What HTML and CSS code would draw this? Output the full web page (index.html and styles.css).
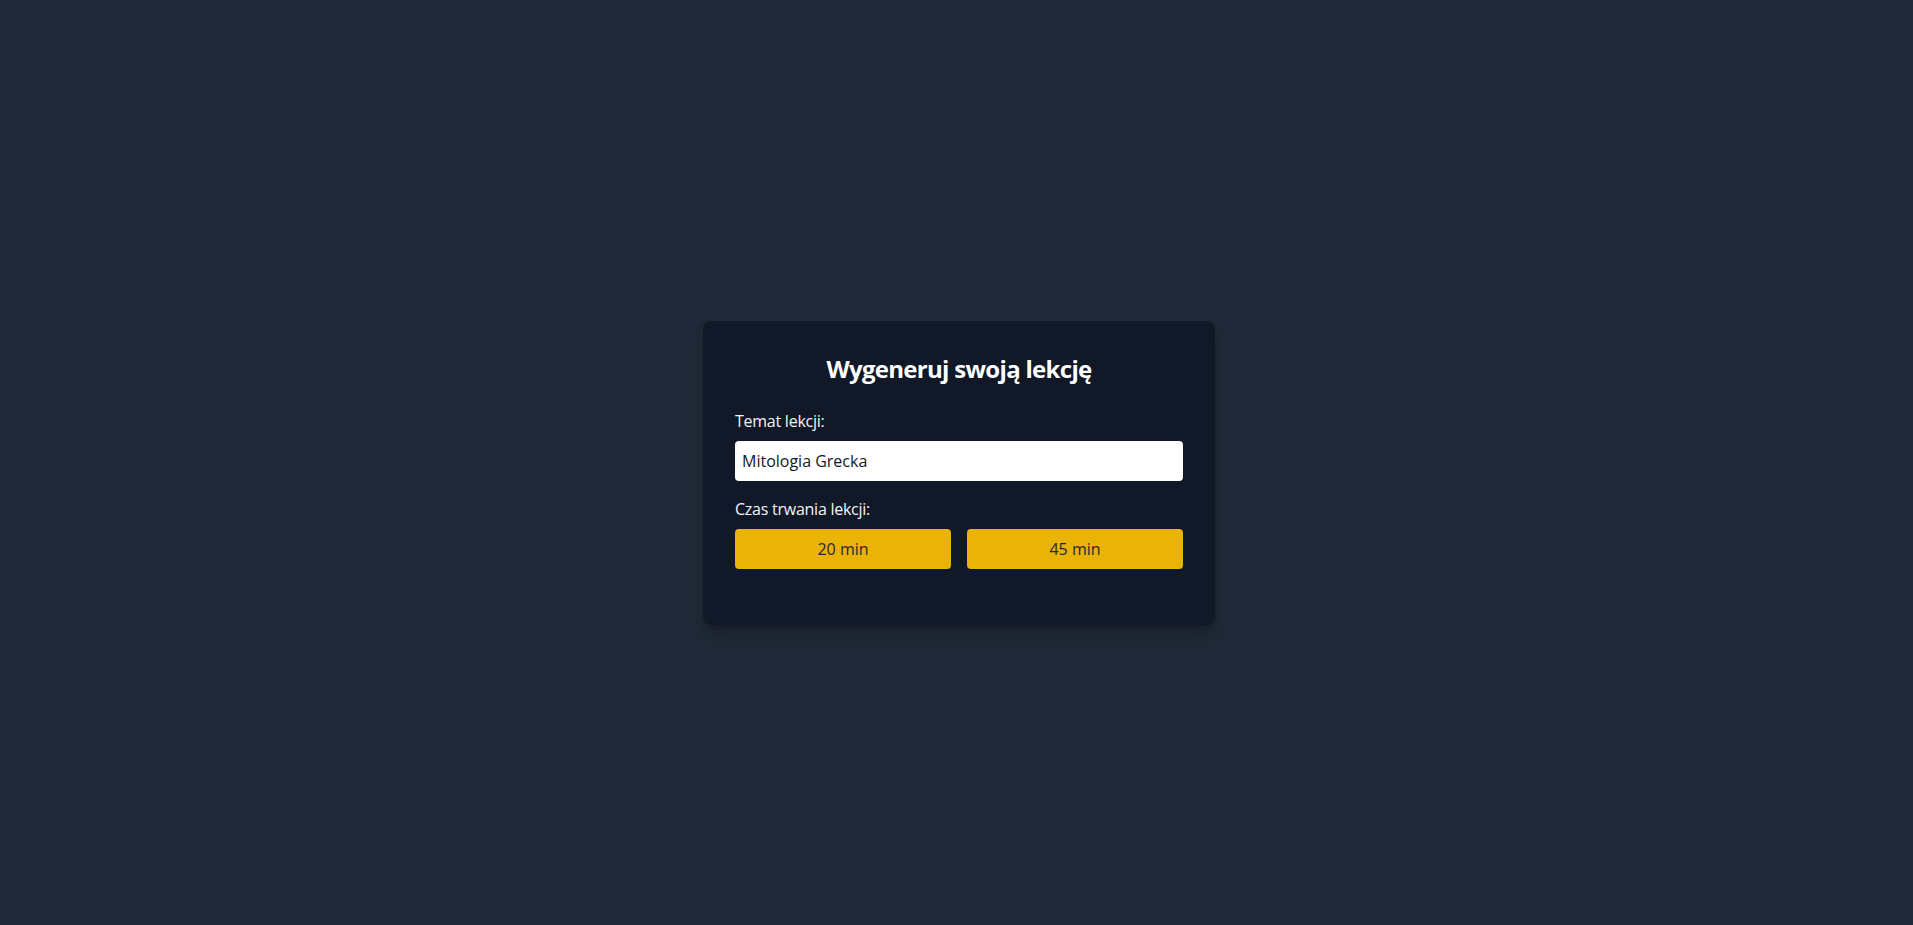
FILE: index.html
```html
<!doctype html>
<html>
  <head>
    <meta charset="utf-8">
    <title>Wygeneruj swoją lekcję</title>
    <link rel="stylesheet" href="styles.css">
  </head>
  <body>
    <main class="page">
      <section class="card">
        <h1 class="card-title">Wygeneruj swoją lekcję</h1>

        <label class="field-label" for="topic">Temat lekcji:</label>
        <input class="field-input" type="text" id="topic" name="topic" value="Mitologia Grecka">

        <label class="field-label">Czas trwania lekcji:</label>
        <div class="durations">
          <button class="duration-btn" type="button">20 min</button>
          <button class="duration-btn" type="button">45 min</button>
        </div>
      </section>
    </main>
  </body>
</html>
```

FILE: styles.css
```css
* {
  box-sizing: border-box;
}

html, body {
  margin: 0;
  padding: 0;
}

body {
  background: #1f2937;
  color: #f3f4f6;
  font-family: "Open Sans", "Noto Sans", "Liberation Sans", sans-serif;
  font-size: 16px;
  line-height: 24px;
  letter-spacing: -0.25px;
}

.page {
  min-height: 100vh;
  display: flex;
  align-items: center;
  justify-content: center;
  padding: 21px 0 0 5px;
}

.card {
  width: 512px;
  background: #111827;
  border-radius: 8px;
  padding: 32px 32px 56px;
  box-shadow: 0 10px 15px -3px rgba(0, 0, 0, 0.25), 0 4px 6px -4px rgba(0, 0, 0, 0.2);
}

.card-title {
  margin: 0 0 24px;
  font-size: 24px;
  line-height: 32px;
  font-weight: 700;
  letter-spacing: -0.7px;
  text-align: center;
  color: #ffffff;
}

.field-label {
  display: block;
  margin-bottom: 8px;
  color: #f3f4f6;
}

.field-input {
  display: block;
  width: 100%;
  height: 40px;
  margin: 0 0 16px;
  padding: 8px 7px;
  border: 0;
  border-radius: 4px;
  background: #ffffff;
  color: #111827;
  font: inherit;
  outline: none;
}

.durations {
  display: flex;
  gap: 16px;
}

.duration-btn {
  flex: 1;
  height: 40px;
  border: 0;
  border-radius: 4px;
  background: #eab308;
  color: #1f2937;
  font: inherit;
  cursor: pointer;
}
```
